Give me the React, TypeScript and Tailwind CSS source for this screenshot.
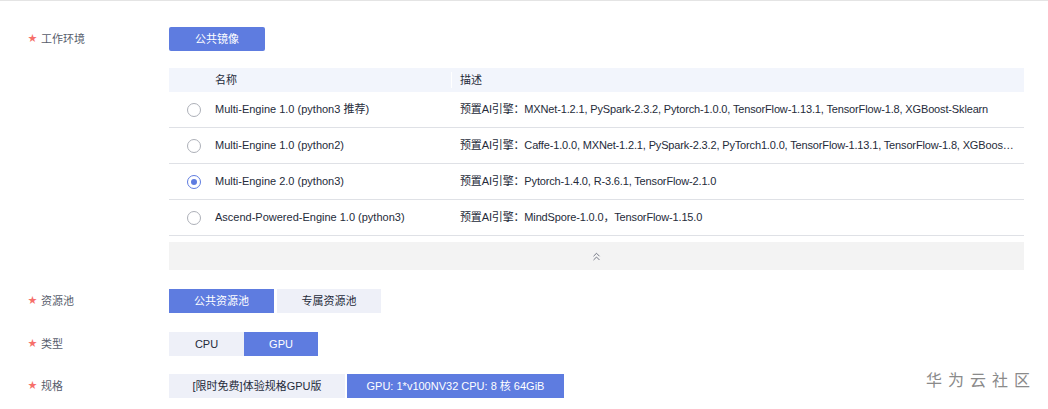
import { ChevronsUp } from 'lucide-react';

type Engine = { name: string; desc: string };

const engines: Engine[] = [
  {
    name: 'Multi-Engine 1.0 (python3 推荐)',
    desc: '预置AI引擎：MXNet-1.2.1, PySpark-2.3.2, Pytorch-1.0.0, TensorFlow-1.13.1, TensorFlow-1.8, XGBoost-Sklearn',
  },
  {
    name: 'Multi-Engine 1.0 (python2)',
    desc: '预置AI引擎：Caffe-1.0.0, MXNet-1.2.1, PySpark-2.3.2, PyTorch1.0.0, TensorFlow-1.13.1, TensorFlow-1.8, XGBoost-Sklearn',
  },
  {
    name: 'Multi-Engine 2.0 (python3)',
    desc: '预置AI引擎：Pytorch-1.4.0, R-3.6.1, TensorFlow-2.1.0',
  },
  {
    name: 'Ascend-Powered-Engine 1.0 (python3)',
    desc: '预置AI引擎：MindSpore-1.0.0，TensorFlow-1.15.0',
  },
];

function Label({ text }: { text: string }) {
  return (
    <div className="flex w-[169px] shrink-0 items-center pl-[28px] text-[11px] text-[#575d6c]">
      <span className="mr-[4px] text-[9px] text-[#f66f6a]">★</span>
      {text}
    </div>
  );
}

function Seg({ text, active, w }: { text: string; active?: boolean; w: string }) {
  return (
    <button
      type="button"
      className={`flex h-[24px] items-center justify-center text-[11px] ${w} ${
        active ? 'bg-[#5e7ce0] text-white' : 'bg-[#eef0f8] text-[#252b3a]'
      }`}
    >
      {text}
    </button>
  );
}

function Radio({ checked }: { checked?: boolean }) {
  return (
    <span
      className={`flex h-[14px] w-[14px] items-center justify-center rounded-full border ${
        checked ? 'border-[#5e7ce0]' : 'border-[#adb0b8]'
      } bg-white`}
    >
      {checked && <span className="h-[6px] w-[6px] rounded-full bg-[#5e7ce0]" />}
    </span>
  );
}

export default function App() {
  return (
    <div
      className="relative h-[409px] w-[1048px] overflow-hidden border-t border-[#e4e4e4] bg-white"
      style={{ fontFamily: '"Liberation Sans", "Noto Sans CJK SC", sans-serif' }}
    >
      <div className="flex flex-col pt-[26px]">
        {/* 工作环境 */}
        <div className="flex">
          <Label text="工作环境" />
          <button
            type="button"
            className="h-[24px] w-[96px] rounded-[2px] bg-[#5e7ce0] text-[11px] text-white"
          >
            公共镜像
          </button>
        </div>

        <div className="ml-[169px] mt-[17px] w-[855px]">
          <div className="flex h-[24px] items-center bg-[#f2f5fc] text-[11px] text-[#252b3a]">
            <div className="w-[46px]" />
            <div className="w-[237px] border-r border-white">名称</div>
            <div className="pl-2">描述</div>
          </div>
          {engines.map((e, i) => (
            <div
              key={e.name}
              className="flex h-[36px] items-center border-b border-[#dfe1e6] text-[11px] text-[#252b3a]"
            >
              <div className="w-[46px] pl-[18px]">
                <Radio checked={i === 2} />
              </div>
              <div className="w-[237px] truncate">{e.name}</div>
              <div className="min-w-0 flex-1 truncate pl-2 pr-2 tracking-[-0.15px]">{e.desc}</div>
            </div>
          ))}
          <div className="mt-[6px] flex h-[28px] items-center justify-center bg-[#f3f3f3] text-[#575d6c]">
            <ChevronsUp size={13} strokeWidth={1.5} />
          </div>
        </div>

        {/* 资源池 */}
        <div className="mt-[19px] flex">
          <Label text="资源池" />
          <div className="flex gap-[3px]">
            <Seg text="公共资源池" active w="w-[105px]" />
            <Seg text="专属资源池" w="w-[104px]" />
          </div>
        </div>

        {/* 类型 */}
        <div className="mt-[19px] flex">
          <Label text="类型" />
          <div className="flex">
            <Seg text="CPU" w="w-[75px]" />
            <Seg text="GPU" active w="w-[74px]" />
          </div>
        </div>

        {/* 规格 */}
        <div className="mt-[18px] flex">
          <Label text="规格" />
          <div className="flex gap-[2px]">
            <Seg text="[限时免费]体验规格GPU版" w="w-[176px]" />
            <Seg text="GPU: 1*v100NV32 CPU: 8 核 64GiB" active w="w-[217px]" />
          </div>
        </div>
      </div>

      <div className="absolute bottom-[16px] right-[12px] text-[16px] tracking-[6px] text-[#8a8a8a]">
        华为云社区
      </div>
    </div>
  );
}
